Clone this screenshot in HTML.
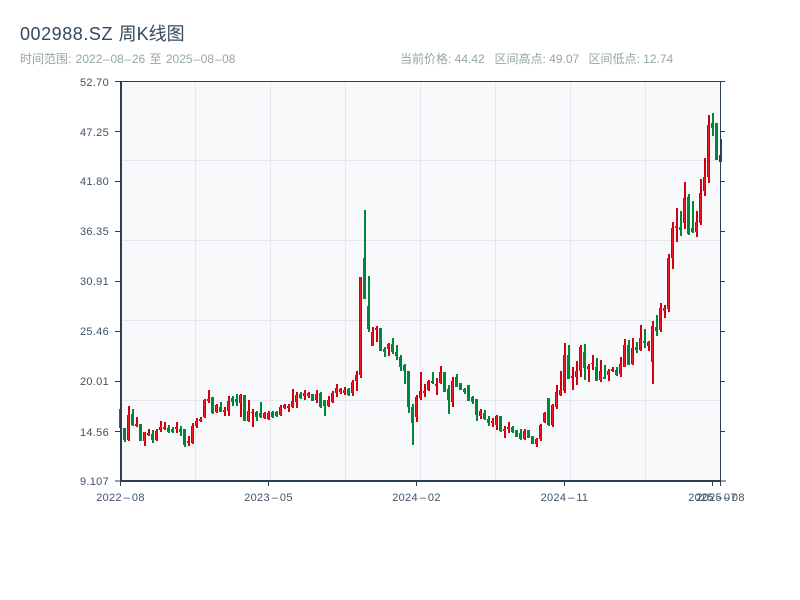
<!DOCTYPE html>
<html><head><meta charset="utf-8"><style>
html,body{margin:0;padding:0;background:#fff}
body{width:800px;height:600px;position:relative;overflow:hidden;font-family:"Liberation Sans","Noto Sans CJK SC",sans-serif}
.t{position:absolute;white-space:nowrap}
.s{font-size:12px;line-height:16px;color:#95a5a6;top:51px}
svg{position:absolute;left:0;top:0}
svg text{font-family:"Liberation Sans","Noto Sans CJK SC",sans-serif;font-size:11px;fill:#3f5266;letter-spacing:.3px}
</style></head><body>
<div class="t" style="left:20px;top:23px;font-size:18px;line-height:22px;color:#34495e"><span style="letter-spacing:.55px">002988.SZ </span>周K线图</div>
<div class="t s" style="left:20px;word-spacing:1px">时间范围: 2022<span style="margin:0 .7px">–</span>08<span style="margin:0 .7px">–</span>26 至 2025<span style="margin:0 .7px">–</span>08<span style="margin:0 .7px">–</span>08</div>
<div class="t s" style="left:400px">当前价格: 44.42</div>
<div class="t s" style="left:494.5px">区间高点: 49.07</div>
<div class="t s" style="left:588.5px">区间低点: 12.74</div>
<svg width="800" height="600" viewBox="0 0 800 600">
<defs>
<path id="rb" d="M128 415V440M136 424V426M144 432V441M148 433V435M156 431V440M160 427V430M164 427V429M176 427V429M188 441V443M192 426V443M196 421V426M200 419V421M204 400V417M208 399V401M216 405V412M224 410V412M228 401V411M240 395V403M248 411V421M252 412V413M264 413V418M268 413V419M280 407V415M284 405V408M288 406V408M292 401V407M296 395V402M304 393V396M308 393V396M316 394V400M328 400V406M332 393V402M336 388V393M340 389V392M344 390V393M352 382V393M356 375V381M360 277V375M372 332V346M376 328V330M388 344V349M416 397V417M420 391V398M424 391V393M428 381V390M436 384V386M440 372V383M452 381V402M480 411V416M492 421V423M496 416V425M504 429V431M508 427V429M524 431V439M536 439V444M540 425V439M544 413V422M552 405V425M556 392V407M560 390V395M564 355V391M572 376V378M576 371V377M580 347V371M588 366V369M592 363V364M600 371V380M608 371V375M612 369V371M620 364V374M624 345V367M632 348V364M640 338V350M648 342V346M652 326V362M660 308V330M664 308V311M668 258V309M672 228V258M676 226V228M684 198V223M696 222V232M700 193V223M704 177V191M708 125V177M720 155V162"/>
</defs>
<rect x="121" y="81" width="599" height="399" fill="#f8f9fa"/>
<path d="M195.500 82V480M270.500 82V480M345.500 82V480M420.500 82V480M495.500 82V480M570.500 82V480M645.500 82V480M121 160.500H720M121 240.500H720M121 320.500H720M121 400.500H720" stroke="#e4e7ec" stroke-width="1" fill="none"/>
<g fill="none">
<path transform="translate(1 0)" stroke="#00873c" stroke-width="2" d="M120 409V428M124 428V442M132 409V426M140 424V441M152 430V443M168 425V433M172 427V433M180 426V436M184 429V447M212 397V414M220 402V412M232 396V406M236 394V406M244 395V421M256 411V421M260 402V418M272 411V418M276 411V417M300 392V399M312 394V401M320 392V408M324 400V416M348 388V396M364 210V299M368 276V332M380 328V351M384 347V357M392 338V354M396 345V360M400 355V371M404 364V384M408 371V413M412 404V445M432 372V384M444 372V392M448 385V414M456 374V387M460 383V390M464 388V394M468 385V401M472 396V404M476 399V421M484 410V420M488 416V426M500 416V432M512 426V433M516 430V437M520 429V440M528 430V438M532 436V444M548 398V426M568 345V379M584 344V380M596 358V381M604 365V379M616 367V376M628 340V365M636 342V353M644 329V348M656 315V336M680 211V236M688 194V235M692 201V233M712 113V136M716 123V160"/>
<path transform="translate(.5 0)" stroke="#00873c" stroke-width="3" d="M120 409V428M124 428V440M132 414V425M140 424V441M152 434V440M168 428V432M172 429V432M180 429V432M184 429V445M212 397V413M220 407V412M232 398V402M236 399V402M244 395V421M256 412V417M260 413V417M272 412V417M276 412V416M300 394V398M312 394V401M320 393V407M324 400V406M348 389V395M364 258V299M368 306V329M380 328V351M384 349V352M392 344V352M396 352V356M400 357V367M404 365V371M408 371V407M412 407V423M432 381V383M444 372V392M448 389V400M456 377V387M460 383V390M464 389V392M468 385V401M472 397V402M476 399V415M484 413V419M488 419V423M500 416V431M512 427V432M516 430V437M520 433V439M528 430V438M532 436V444M548 398V425M568 355V379M584 352V368M596 367V381M604 377V379M616 370V375M628 345V365M636 347V350M644 341V343M656 327V331M680 227V230M688 197V234M692 228V232M712 123V128M716 123V160"/>
<path transform="translate(1 0)" stroke="#cf0010" stroke-width="2" d="M128 406V441M136 417V427M144 432V446M148 429V436M156 429V441M160 421V432M164 422V430M176 422V433M188 436V446M192 423V444M196 418V428M200 417V422M204 399V418M208 390V403M216 404V413M224 407V416M228 396V416M240 394V417M248 400V422M252 409V427M264 412V419M268 411V420M280 405V416M284 404V409M288 404V412M292 389V408M296 392V408M304 390V400M308 392V398M316 390V403M328 396V407M332 391V403M336 384V397M340 388V394M344 387V395M352 380V396M356 371V391M360 277V378M372 327V346M376 326V342M388 343V356M416 395V422M420 372V400M424 384V397M428 380V391M436 378V395M440 366V384M452 377V407M480 409V419M492 418V427M496 415V430M504 426V438M508 422V433M524 429V440M536 438V447M540 424V441M544 412V423M552 404V427M556 385V409M560 371V396M564 343V393M572 367V390M576 361V385M580 345V377M588 364V382M592 355V370M600 360V382M608 369V381M612 367V372M620 357V377M624 339V367M632 338V365M640 325V351M648 341V351M652 321V384M660 303V332M664 305V318M668 254V312M672 222V269M676 208V242M684 182V229M696 211V237M700 179V225M704 158V196M708 115V183M720 139V162"/>
<use href="#rb" transform="translate(.5 0)" stroke="#cf0010" stroke-width="3"/>
<use href="#rb" transform="translate(.5 0)" stroke="#f01a22" stroke-width="1"/>
</g>
<path d="M115 81.500H725M720.500 81V486M115 131.500H120M115 181.500H120M115 231.500H120M115 281.500H120M115 331.500H120M115 381.500H120M115 431.500H120M115 481H120M721 131.500H725M721 181.500H725M721 231.500H725M721 281.500H725M721 331.500H725M721 381.500H725M721 431.500H725M120.500 482V486M268.500 482V486M416.500 482V486M564.500 482V486M712.500 482V486M721 481H726" stroke="#2c3e50" stroke-width="1" fill="none"/>
<path d="M121 81V482M120 481H721" stroke="#2c3e50" stroke-width="2" fill="none"/>
<g text-anchor="end">
<text x="109" y="86">52.70</text>
<text x="109" y="136">47.25</text>
<text x="109" y="185">41.80</text>
<text x="109" y="235">36.35</text>
<text x="109" y="285">30.91</text>
<text x="109" y="335">25.46</text>
<text x="109" y="385">20.01</text>
<text x="109" y="436">14.56</text>
<text x="109" y="485">9.107</text>
</g>
<g text-anchor="middle">
<text x="120.500" y="501">2022<tspan dx="1.800">–</tspan><tspan dx="1.800">08</tspan></text>
<text x="268.500" y="501">2023<tspan dx="1.800">–</tspan><tspan dx="1.800">05</tspan></text>
<text x="416.500" y="501">2024<tspan dx="1.800">–</tspan><tspan dx="1.800">02</tspan></text>
<text x="564.500" y="501">2024<tspan dx="1.800">–</tspan><tspan dx="1.800">11</tspan></text>
<text x="712.500" y="501">2025<tspan dx="1.800">–</tspan><tspan dx="1.800">07</tspan></text>
<text x="720.500" y="501">2025<tspan dx="1.800">–</tspan><tspan dx="1.800">08</tspan></text>
</g>
</svg>
</body></html>
